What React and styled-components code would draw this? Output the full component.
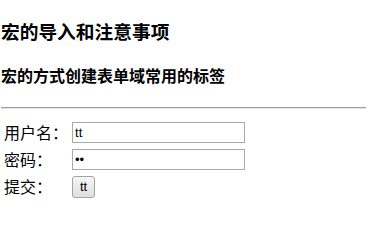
import React from 'react'
import styled, { createGlobalStyle } from 'styled-components'

const GlobalStyle = createGlobalStyle`
    body {
        margin: 0 1px;
        background: #fff;
        color: #000;
        font-family: "Microsoft YaHei", "Noto Sans CJK SC", "Liberation Sans", sans-serif;
    }
`

const Title = styled.h3`
    font-size: 18.72px;
    font-weight: bold;
    margin: 17px 0 0;
    line-height: 27px;
`

const Subtitle = styled.h4`
    font-size: 16px;
    font-weight: bold;
    margin: 20px 0 0;
    line-height: 23px;
`

const Rule = styled.hr`
    margin: 20px 0 0;
    height: 0;
    border: none;
    border-top: 1px solid #a0a0a0;
    border-bottom: 1px solid #e4e4e4;
`

const FormTable = styled.table`
    margin-top: 9px;
    border-spacing: 2px;
    font-size: 16px;
`

const Cell = styled.td`
    padding: 1px;
    line-height: 23px;
    vertical-align: middle;
    white-space: nowrap;
`

const TextInput = styled.input`
    box-sizing: border-box;
    width: 173px;
    height: 21px;
    margin: 0;
    padding: 1px 2px;
    border: 1px solid #a9a9a9;
    font-family: "Liberation Sans", Arial, sans-serif;
    font-size: 13px;
    color: #000;
    display: block;
    outline: none;
`

const SubmitButton = styled.button`
    box-sizing: border-box;
    width: 23px;
    height: 22px;
    margin: 0;
    padding: 0;
    border: 1px solid #a3a3a3;
    border-radius: 3px;
    background: linear-gradient(#f6f6f6, #dedede);
    font-family: "Liberation Sans", Arial, sans-serif;
    font-size: 13px;
    color: #000;
    display: block;
`

const rows = [
    { label: '用户名：', type: 'text', value: 'tt' },
    { label: '密码：', type: 'password', value: 'tt' },
]

export default function App() {
    return (
        <>
            <GlobalStyle />
            <Title>宏的导入和注意事项</Title>
            <Subtitle>宏的方式创建表单域常用的标签</Subtitle>
            <Rule />
            <form onSubmit={ e => e.preventDefault() }>
                <FormTable>
                    <tbody>
                        {
                            rows.map(row => (
                                <tr key={ row.label }>
                                    <Cell>{ row.label }</Cell>
                                    <Cell>
                                        <TextInput type={ row.type } defaultValue={ row.value } />
                                    </Cell>
                                </tr>
                            ))
                        }
                        <tr>
                            <Cell>提交：</Cell>
                            <Cell>
                                <SubmitButton type="submit">tt</SubmitButton>
                            </Cell>
                        </tr>
                    </tbody>
                </FormTable>
            </form>
        </>
    )
}
